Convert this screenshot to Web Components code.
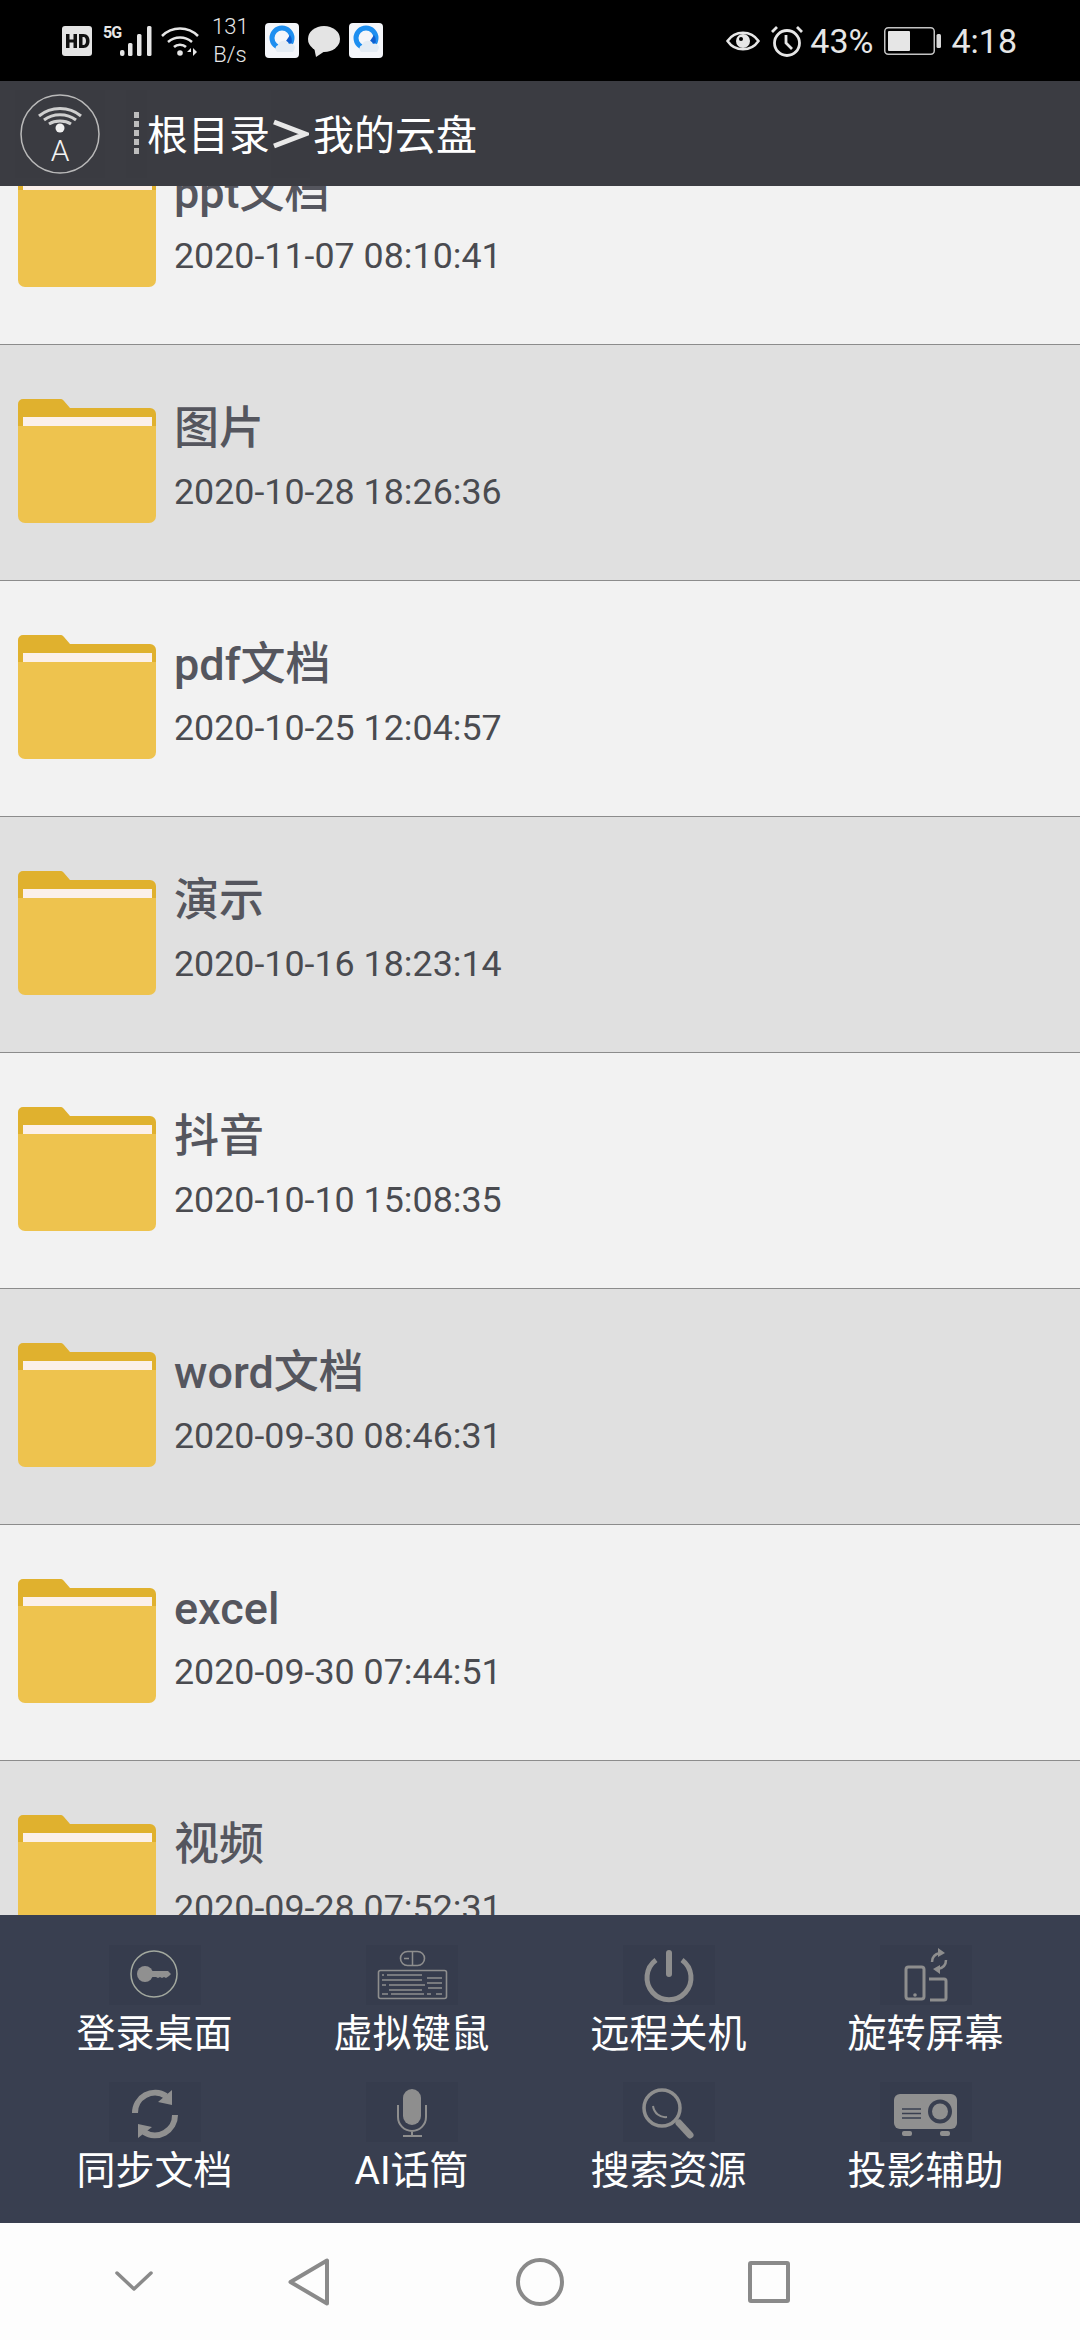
<!DOCTYPE html>
<html lang="zh">
<head>
<meta charset="utf-8">
<title>我的云盘</title>
<style>
  html, body { margin: 0; padding: 0; }
  body { width: 1080px; height: 2340px; overflow: hidden; font-family: Roboto, "Noto Sans CJK SC", sans-serif; }
  app-shell { height: 2340px; }
</style>
</head>
<body>
<app-shell>
  <status-bar slot="status"></status-bar>
  <path-header slot="header" root="根目录" folder="我的云盘"></path-header>
  <file-list slot="list">
    <file-row name="ppt文档" date="2020-11-07 08:10:41"></file-row>
    <file-row name="图片" date="2020-10-28 18:26:36"></file-row>
    <file-row name="pdf文档" date="2020-10-25 12:04:57"></file-row>
    <file-row name="演示" date="2020-10-16 18:23:14"></file-row>
    <file-row name="抖音" date="2020-10-10 15:08:35"></file-row>
    <file-row name="word文档" date="2020-09-30 08:46:31"></file-row>
    <file-row name="excel" date="2020-09-30 07:44:51"></file-row>
    <file-row name="视频" date="2020-09-28 07:52:31"></file-row>
  </file-list>
  <action-panel slot="actions">
    <action-item label="登录桌面">
      <svg viewBox="0 0 92 60" width="92" height="60">
        <circle cx="45" cy="29" r="23" fill="none" stroke="#a3a99f" stroke-width="1.5"/>
        <circle cx="36" cy="29" r="8" fill="#909090"/>
        <path d="M42 26h17l3 3-2 2-3 2-2-1-2 1-2-1-2 1-2-1-5 0z" fill="#909090"/>
      </svg>
    </action-item>
    <action-item label="虚拟键鼠">
      <svg viewBox="0 0 92 60" width="92" height="60" fill="none" stroke="#8e8e8e">
        <rect x="34.5" y="6.5" width="24" height="14" rx="7" stroke-width="1.6"/>
        <path d="M46.5 6.5v14M38 13.5h5" stroke-width="1.5"/>
        <rect x="12.5" y="25.5" width="68" height="28" rx="2" stroke-width="1.6"/>
        <path d="M16 30h2M21 30h35M16 35h40M61 33h15M16 40h4M23 40h36M61 38h15M23 45h33M62 43h14M16 49h6M25 49h33M61 49h4M70 49h6" stroke-width="1.5"/>
      </svg>
    </action-item>
    <action-item label="远程关机">
      <svg viewBox="0 0 92 60" width="92" height="60" fill="none" stroke="#8e8e8e">
        <path d="M33 15a22 22 0 1 0 26 0" stroke-width="5"/>
        <path d="M46 8v21" stroke-width="6" stroke-linecap="round"/>
      </svg>
    </action-item>
    <action-item label="旋转屏幕">
      <svg viewBox="0 0 92 60" width="92" height="60" fill="none" stroke="#8e8e8e">
        <rect x="26" y="22" width="18" height="32" rx="2.5" stroke-width="3"/>
        <circle cx="35" cy="50" r="1.8" fill="#8e8e8e" stroke="none"/>
        <path d="M49 34h15a2 2 0 0 1 2 2v17a2 2 0 0 1-2 2H50" stroke-width="3"/>
        <path d="M52 17c0-5 3-8 8-9M66 15c0 5-3 8-8 9" stroke-width="2.5"/>
        <path d="M58 3l7 5-7 4zM60 20l-7 4 7 5z" fill="#8e8e8e" stroke="none"/>
      </svg>
    </action-item>
    <action-item label="同步文档">
      <svg viewBox="0 0 92 60" width="92" height="60" fill="none" stroke="#909090">
        <path d="M26 31a20 20 0 0 1 31-17" stroke-width="6"/>
        <path d="M66 33a20 20 0 0 1-31 17" stroke-width="6"/>
        <path d="M63 8v15l-14-3zM29 56V42l14 3z" fill="#909090" stroke="none"/>
      </svg>
    </action-item>
    <action-item label="AI话筒">
      <svg viewBox="0 0 92 60" width="92" height="60" fill="none" stroke="#8e8e8e">
        <rect x="37" y="7" width="18" height="36" rx="9" fill="#8e8e8e" stroke="none"/>
        <path d="M32 23v12a14 14 0 0 0 28 0V23M46 49v5M37 54h19" stroke-width="2"/>
      </svg>
    </action-item>
    <action-item label="搜索资源">
      <svg viewBox="0 0 92 60" width="92" height="60" fill="none" stroke="#8e8e8e">
        <circle cx="39" cy="26" r="18" stroke-width="3.5"/>
        <path d="M30 24c1 7 7 12 14 11" stroke-width="2"/>
        <path d="M56 41l11 12" stroke-width="7" stroke-linecap="round"/>
      </svg>
    </action-item>
    <action-item label="投影辅助">
      <svg viewBox="0 0 92 60" width="92" height="60">
        <rect x="14" y="12" width="63" height="35" rx="6" fill="#909090"/>
        <circle cx="60" cy="29.5" r="12" fill="#393f50"/>
        <circle cx="60" cy="29.5" r="8" fill="#909090"/>
        <path d="M22 27h19M22 31.5h19M22 36h19" stroke="#393f50" stroke-width="1.5"/>
        <rect x="22" y="49" width="10" height="5" rx="2" fill="#909090"/>
        <rect x="60" y="49" width="10" height="5" rx="2" fill="#909090"/>
      </svg>
    </action-item>
  </action-panel>
  <nav-keys slot="nav"></nav-keys>
</app-shell>

<script>
class AppShell extends HTMLElement {
  constructor() {
    super();
    this.attachShadow({ mode: "open" });
    this.shadowRoot.innerHTML = `
      <style>
        :host { display: flex; flex-direction: column; width: 1080px; }
        .list { flex: 1; min-height: 0; overflow: hidden; }
      </style>
      <slot name="status"></slot>
      <slot name="header"></slot>
      <div class="list"><slot name="list"></slot></div>
      <slot name="actions"></slot>
      <slot name="nav"></slot>
    `;
  }
}

class StatusBar extends HTMLElement {
  constructor() {
    super();
    this.attachShadow({ mode: "open" });
    const browserIcon = `
      <svg viewBox="0 0 34 35" width="34" height="35">
        <rect width="34" height="35" rx="4" fill="#f4f6fa"/>
        <circle cx="17" cy="15" r="10" fill="none" stroke="#1e8ff0" stroke-width="5"/>
        <path d="M25 12a9 9 0 0 1 1 9l-5-3z" fill="#0f5fd0"/>
        <path d="M12 29a4 4 0 0 1 1-7 6 6 0 0 1 11-1 4 4 0 0 1 5 6l-1 2z" fill="#e4ecf4"/>
      </svg>`;
    this.shadowRoot.innerHTML = `
      <style>
        :host { display: flex; align-items: center; justify-content: space-between; box-sizing: border-box; height: 81px; padding: 0 63px 0 62px; background: #000; color: #e6e6e6; font-family: Roboto, sans-serif; }
        .group { display: flex; align-items: center; }
        svg { display: block; flex: none; }
        .net { width: 17px; height: 32px; margin-left: 11px; font-size: 16px; line-height: 16px; font-weight: 700; letter-spacing: -1px; white-space: nowrap; }
        .speed { width: 36px; margin: 0 17px 0 13px; font-size: 22px; line-height: 28px; text-align: center; font-weight: 300; }
        .pct { font-size: 34px; margin: 0 11px 0 7px; }
        .time { font-size: 34px; margin-left: 9px; }
      </style>
      <div class="group">
        <svg viewBox="0 0 30 30" width="30" height="30">
          <rect width="30" height="30" rx="3" fill="#e4e4e4"/>
          <path d="M4 8h3.500v5.500h4V8H15v14h-3.500v-5.500h-4V22H4zM17 8h4.500c4 0 6 3 6 7s-2 7-6 7H17zm3.500 3v8h1c1.700 0 2.500-1.800 2.500-4s-.8-4-2.500-4z" fill="#111"/>
        </svg>
        <div class="net">5G</div>
        <svg viewBox="0 0 33 32" width="33" height="32">
          <rect x="0" y="25" width="4.500" height="6" rx="2" fill="#e6e6e6"/>
          <rect x="8" y="18" width="4.500" height="13" rx="1.500" fill="#e6e6e6"/>
          <rect x="17" y="9" width="4.500" height="22" rx="1.500" fill="#e6e6e6"/>
          <rect x="27" y="1" width="4.500" height="30" rx="1.500" fill="#e6e6e6"/>
        </svg>
        <svg viewBox="0 0 38 32" width="38" height="32" style="margin-left:8px" fill="none" stroke="#e6e6e6" stroke-width="2.500">
          <path d="M1 11c10-10 26-10 36 0M7 17c7-6 17-6 24 0M13 22c3-3 9-3 12 0"/>
          <circle cx="19" cy="28" r="2.800" fill="#e6e6e6" stroke="none"/>
          <path d="M30 24l-4 4h4zM32 24v8l4-4z" fill="#e6e6e6" stroke="none" transform="translate(0 -1)"/>
        </svg>
        <div class="speed">131<br>B/s</div>
        ${browserIcon}
        <svg viewBox="0 0 32 32" width="32" height="32" style="margin:0 9px">
          <ellipse cx="16" cy="14" rx="16" ry="13" fill="#e4e4e4"/>
          <path d="M6 22l2 10 9-6z" fill="#e4e4e4"/>
        </svg>
        ${browserIcon}
      </div>
      <div class="group">
        <svg viewBox="0 0 34 28" width="34" height="28" fill="none" stroke="#e6e6e6" stroke-width="2.500">
          <path d="M1.500 14C9 3 25 3 32.500 14 25 25 9 25 1.500 14z"/>
          <circle cx="17" cy="14" r="7" fill="#e6e6e6" stroke="none"/>
          <circle cx="15" cy="12" r="2" fill="#000" stroke="none"/>
        </svg>
        <svg viewBox="0 0 32 32" width="32" height="32" style="margin-left:11px" fill="none" stroke="#e6e6e6" stroke-width="2.800">
          <circle cx="16" cy="18" r="12.500"/>
          <path d="M15 10v8l6 6M1 7l5-5M31 7l-5-5"/>
        </svg>
        <span class="pct">43%</span>
        <svg viewBox="0 0 58 28" width="58" height="28">
          <rect x=".75" y=".75" width="49.500" height="26.500" rx="3.500" fill="none" stroke="#c4c4c4" stroke-width="1.500"/>
          <rect x="4" y="4" width="22" height="20" rx="1" fill="#e6e6e6"/>
          <rect x="52.500" y="7" width="4.500" height="14" rx="1.500" fill="#d8d8d8"/>
        </svg>
        <span class="time">4:18</span>
      </div>
    `;
  }
}

class PathHeader extends HTMLElement {
  constructor() {
    super();
    this.attachShadow({ mode: "open" });
    this.shadowRoot.innerHTML = `
      <style>
        :host { display: flex; align-items: center; box-sizing: border-box; height: 105px; padding-left: 15px; background: #3b3c42; color: #fff; font: 41px/1 Roboto, "Noto Sans CJK SC", sans-serif; }
        .logo, .dash, .sep { display: flex; align-items: center; justify-content: center; height: 88px; background: #3a3b41; }
        .logo { width: 90px; }
        .dash { width: 21px; margin-left: 21px; }
        .dash i { display: block; width: 5px; height: 44px; background: repeating-linear-gradient(#bdbdbd 0 6px, transparent 6px 9px); }
        .sep { width: 39px; margin: 0 3px 0 1px; }
        span { margin-top: 5px; }
        svg { display: block; }
        .sep svg { filter: blur(.7px); }
      </style>
      <div class="logo">
        <svg viewBox="0 0 80 80" width="80" height="80" fill="none" stroke="#cfcfcf">
          <circle cx="40" cy="40" r="39" stroke="#b9b9b9" stroke-width="1.500"/>
          <path d="M19 22c12-10 30-10 42 0M24 26c9-7 23-7 32 0M29 30c6-4 16-4 22 0" stroke-width="3"/>
          <circle cx="40" cy="34" r="4.500" fill="#f0f0f0" stroke="none"/>
          <text x="40" y="67" text-anchor="middle" font-family="Roboto, sans-serif" font-size="30" font-weight="300" fill="#f2f2f2" stroke="none">A</text>
        </svg>
      </div>
      <div class="dash"><i></i></div>
      <span></span>
      <div class="sep">
        <svg viewBox="0 0 36 30" width="36" height="30" fill="none" stroke="#e8e8e8" stroke-width="5">
          <path d="M1 3l31 12L1 27"/>
        </svg>
      </div>
      <span></span>
    `;
    const labels = this.shadowRoot.querySelectorAll("span");
    labels[0].textContent = this.getAttribute("root");
    labels[1].textContent = this.getAttribute("folder");
  }
}

class FileList extends HTMLElement {
  constructor() {
    super();
    this.attachShadow({ mode: "open" });
    // the list is scrolled: the first row sits partly under the header
    this.shadowRoot.innerHTML = `
      <style>
        :host { display: block; margin-top: -77px; }
        ::slotted(file-row:nth-child(even)) { background: #e0e0e0; }
      </style>
      <slot></slot>
    `;
  }
}

class FileRow extends HTMLElement {
  constructor() {
    super();
    this.attachShadow({ mode: "open" });
    this.shadowRoot.innerHTML = `
      <style>
        :host { display: flex; align-items: center; box-sizing: border-box; height: 236px; padding-left: 18px; background: #f2f2f2; border-bottom: 1px solid #8c8c8c; }
        svg { display: block; flex: none; margin-top: -3px; }
        .text { margin-left: 18px; padding-bottom: 4px; }
        .name { font: 500 45px/63px Roboto, "Noto Sans CJK SC", sans-serif; color: #55565e; }
        .date { margin-top: 1px; font: 400 35.8px/63px Roboto, sans-serif; color: #4a4b50; }
      </style>
      <svg viewBox="0 0 138 124" width="138" height="124">
        <path d="M0 5a5 5 0 0 1 5-5h37a4 4 0 0 1 4 2l6 7h80a6 6 0 0 1 6 6v18H0z" fill="#e0b12e"/>
        <rect x="5" y="18" width="129" height="9" fill="#fbf0ea"/>
        <path d="M0 27h138v90a7 7 0 0 1-7 7H7a7 7 0 0 1-7-7z" fill="#eec34e"/>
      </svg>
      <div class="text">
        <div class="name"></div>
        <div class="date"></div>
      </div>
    `;
    this.shadowRoot.querySelector(".name").textContent = this.getAttribute("name");
    this.shadowRoot.querySelector(".date").textContent = this.getAttribute("date");
  }
}

class ActionPanel extends HTMLElement {
  constructor() {
    super();
    this.attachShadow({ mode: "open" });
    this.shadowRoot.innerHTML = `
      <style>
        :host { display: grid; grid-template-columns: repeat(4, 257px); grid-auto-rows: 137px; box-sizing: border-box; height: 308px; padding: 30px 0 0 26px; background: #393f50; }
      </style>
      <slot></slot>
    `;
  }
}

class ActionItem extends HTMLElement {
  constructor() {
    super();
    this.attachShadow({ mode: "open" });
    this.shadowRoot.innerHTML = `
      <style>
        :host { display: flex; flex-direction: column; align-items: center; }
        .icon { width: 92px; height: 60px; background: #363c4d; }
        ::slotted(svg) { display: block; }
        .label { margin-top: 3px; font: 39px/52px Roboto, "Noto Sans CJK SC", sans-serif; color: #fff; white-space: nowrap; }
      </style>
      <div class="icon"><slot></slot></div>
      <div class="label"></div>
    `;
    this.shadowRoot.querySelector(".label").textContent = this.getAttribute("label");
  }
}

class NavKeys extends HTMLElement {
  constructor() {
    super();
    this.attachShadow({ mode: "open" });
    this.shadowRoot.innerHTML = `
      <style>
        :host { display: flex; align-items: center; box-sizing: border-box; height: 117px; padding-left: 115px; background: #fdfdfd; }
        svg { display: block; flex: none; fill: none; stroke: #8a8a8a; }
      </style>
      <svg viewBox="0 0 38 20" width="38" height="20" style="margin-top:-1px" stroke-width="3.5" stroke-linecap="round" stroke-linejoin="round">
        <path d="M2 2l17 16L36 2"/>
      </svg>
      <svg viewBox="0 0 42 48" width="42" height="48" style="margin-left:135px" stroke-width="4" stroke-linejoin="round">
        <path d="M39 2.5v43L2.5 24z"/>
      </svg>
      <svg viewBox="0 0 48 48" width="48" height="48" style="margin-left:186px" stroke-width="4">
        <circle cx="24" cy="24" r="22"/>
      </svg>
      <svg viewBox="0 0 42 42" width="42" height="42" style="margin-left:184px" stroke-width="4" stroke-linejoin="round">
        <rect x="2" y="2" width="38" height="38" rx="1"/>
      </svg>
    `;
  }
}

customElements.define("app-shell", AppShell);
customElements.define("status-bar", StatusBar);
customElements.define("path-header", PathHeader);
customElements.define("file-list", FileList);
customElements.define("file-row", FileRow);
customElements.define("action-panel", ActionPanel);
customElements.define("action-item", ActionItem);
customElements.define("nav-keys", NavKeys);
</script>
</body>
</html>
